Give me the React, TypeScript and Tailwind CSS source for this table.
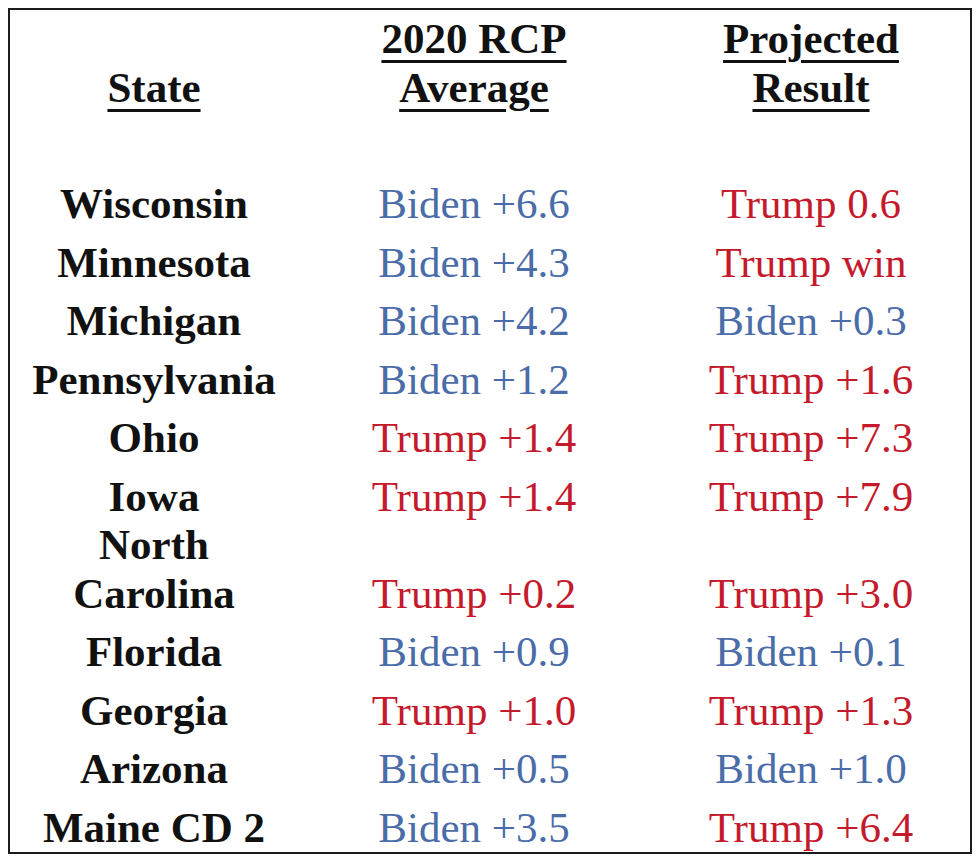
import React from "react";

type Row = { state: string; rcp: string; proj: string; pad?: string };

const BLUE = "text-[#4a6ca8]";
const RED = "text-[#c41a2c]";

const rows: Row[] = [
  { state: "Wisconsin", rcp: "Biden +6.6", proj: "Trump 0.6" },
  { state: "Minnesota", rcp: "Biden +4.3", proj: "Trump win" },
  { state: "Michigan", rcp: "Biden +4.2", proj: "Biden +0.3" },
  { state: "Pennsylvania", rcp: "Biden +1.2", proj: "Trump +1.6" },
  { state: "Ohio", rcp: "Trump +1.4", proj: "Trump +7.3" },
  { state: "Iowa", rcp: "Trump +1.4", proj: "Trump +7.9", pad: "none" },
  { state: "North Carolina", rcp: "Trump +0.2", proj: "Trump +3.0" },
  { state: "Florida", rcp: "Biden +0.9", proj: "Biden +0.1" },
  { state: "Georgia", rcp: "Trump +1.0", proj: "Trump +1.3" },
  { state: "Arizona", rcp: "Biden +0.5", proj: "Biden +1.0" },
  { state: "Maine CD 2", rcp: "Biden +3.5", proj: "Trump +6.4", pad: "last" },
];

function color(v: string) {
  return v.startsWith("Biden") ? BLUE : RED;
}

export default function App() {
  return (
    <div className="bg-white w-[980px] h-[861px] pt-2 pl-2" style={{ fontFamily: '"Liberation Serif", "Times New Roman", serif' }}>
      <div className="w-[964px] border-2 border-[#1c1c1c] text-[43px] leading-[48.5px]">
        {/* header */}
        <div className="grid grid-cols-[288px_352px_322px] pt-[5px] pb-[68px] font-bold text-[#111] text-center">
          <div className="flex items-end justify-center">
            <span className="underline decoration-[3px] underline-offset-[7px]">State</span>
          </div>
          <div className="flex flex-col items-center">
            <span className="underline decoration-[3px] underline-offset-[7px]">2020 RCP</span>
            <span className="underline decoration-[3px] underline-offset-[7px]">Average</span>
          </div>
          <div className="flex flex-col items-center">
            <span className="underline decoration-[3px] underline-offset-[7px]">Projected</span>
            <span className="underline decoration-[3px] underline-offset-[7px]">Result</span>
          </div>
        </div>
        {rows.map((r) => (
          <div
            key={r.state}
            className={
              "grid grid-cols-[288px_352px_322px] text-center " +
              (r.pad === "none" ? "pb-0" : r.pad === "last" ? "pb-0" : "pb-[10px]")
            }
          >
            <div className="font-bold text-[#111] flex flex-col items-center justify-end">
              {r.state === "North Carolina" ? (
                <>
                  <span>North</span>
                  <span>Carolina</span>
                </>
              ) : (
                <span>{r.state}</span>
              )}
            </div>
            <div className={"flex items-end justify-center " + color(r.rcp)}>{r.rcp}</div>
            <div className={"flex items-end justify-center " + color(r.proj)}>{r.proj}</div>
          </div>
        ))}
      </div>
    </div>
  );
}
